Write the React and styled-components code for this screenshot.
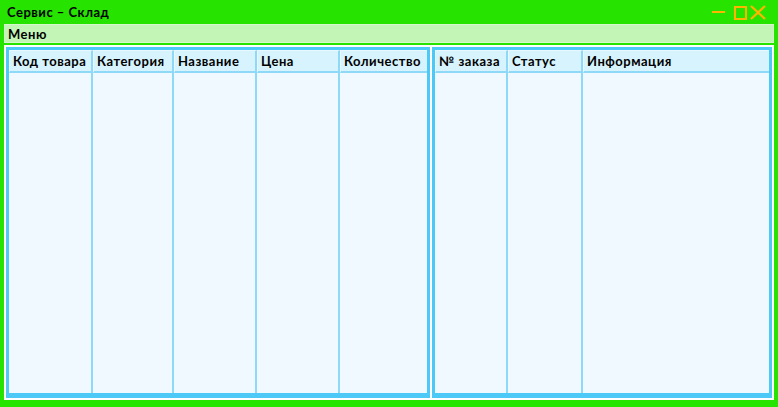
import React from "react";
import styled, { createGlobalStyle } from "styled-components";

const Global = createGlobalStyle`
  html, body { margin: 0; padding: 0; }
  body { font-family: "Comic Sans MS", "Lato", "Open Sans", sans-serif; }
`;

const Window = styled.div`
  height: 407px;
  box-sizing: border-box;
  background: #26e400;
  display: flex;
  flex-direction: column;
  overflow: hidden;
`;

const TitleBar = styled.div`
  height: 24px;
  display: flex;
  align-items: center;
  justify-content: space-between;
  padding: 0 12px 0 7px;
  box-sizing: border-box;
`;

const Title = styled.div`
  font-size: 13px;
  font-weight: 700;
  color: #000;
  letter-spacing: 0.5px;
  margin-top: -1px;
`;

const Controls = styled.div`
  display: flex;
  align-items: center;
  height: 24px;
`;

const CtrlIcon = styled.svg`
  width: 16px;
  height: 16px;
  display: block;
  margin-left: ${(p) => p.$gap || 0}px;
`;

const MenuBar = styled.div`
  margin: 0 4px;
  height: 19px;
  background: #c3f6b6;
  box-shadow: inset 0 0 0 1px #d6f9cc;
  display: flex;
  align-items: center;
  padding: 0 4px;
  font-size: 13px;
  font-weight: 700;
  letter-spacing: 0.5px;
  color: #000;
`;

const Content = styled.div`
  flex: 1;
  margin: 2px 4px 7px;
  background: #fff;
  padding: 2px;
  display: flex;
  gap: 2px;
  min-height: 0;
`;

const Panel = styled.div`
  width: ${(p) => (p.$width ? `${p.$width}px` : "auto")};
  flex: ${(p) => (p.$width ? "none" : "1")};
  box-sizing: border-box;
  border: 3px solid #4cc9f6;
  border-bottom-width: 5px;
  display: grid;
  grid-template-columns: ${(p) => p.$cols};
  grid-template-rows: 23px 1fr;
  background: #f0f9ff;
`;

const HeadCell = styled.div`
  background: #d7f3fd;
  border-right: ${(p) => (p.$last ? "none" : "2px solid #8fd9f8")};
  border-bottom: 2px solid #8fd9f8;
  border-left: 1px solid #e9f8fe;
  border-top: 1px solid #e9f8fe;
  box-sizing: border-box;
  display: flex;
  align-items: center;
  padding: 0 0 0 3px;
  font-size: 13px;
  font-weight: 700;
  letter-spacing: 0.5px;
  color: #000;
  white-space: nowrap;
  overflow: hidden;
`;

const BodyCell = styled.div`
  background: #f0f9ff;
  border-right: ${(p) => (p.$last ? "none" : "2px solid #8fd9f8")};
  box-sizing: border-box;
`;

function Table({ width, cols, headers }) {
  const template = cols.map((c) => `${c}px`).join(" ");
  return (
    <Panel $width={width} $cols={template}>
      {headers.map((h, i) => (
        <HeadCell key={h} $last={i === headers.length - 1}>
          {h}
        </HeadCell>
      ))}
      {headers.map((h, i) => (
        <BodyCell key={h} $last={i === headers.length - 1} />
      ))}
    </Panel>
  );
}

export default function App() {
  return (
    <>
      <Global />
      <Window>
        <TitleBar>
          <Title>Сервис – Склад</Title>
          <Controls>
            <CtrlIcon viewBox="0 0 16 16">
              <line x1="2" y1="8" x2="15" y2="8" stroke="#ffb400" strokeWidth="2" />
            </CtrlIcon>
            <CtrlIcon viewBox="0 0 16 16" $gap={6}>
              <rect x="3" y="3" width="11" height="12" fill="none" stroke="#ffb400" strokeWidth="2" />
            </CtrlIcon>
            <CtrlIcon viewBox="0 0 16 16" $gap={2}>
              <path d="M1 2 L15 15 M15 2 L1 15" stroke="#ffb400" strokeWidth="2.2" />
            </CtrlIcon>
          </Controls>
        </TitleBar>
        <MenuBar>Меню</MenuBar>
        <Content>
          <Table
            width={424}
            cols={[84, 81, 83, 83, 87]}
            headers={["Код товара", "Категория", "Название", "Цена", "Количество"]}
          />
          <Table
            cols={[73, 75, 186]}
            headers={["№ заказа", "Статус", "Информация"]}
          />
        </Content>
      </Window>
    </>
  );
}
